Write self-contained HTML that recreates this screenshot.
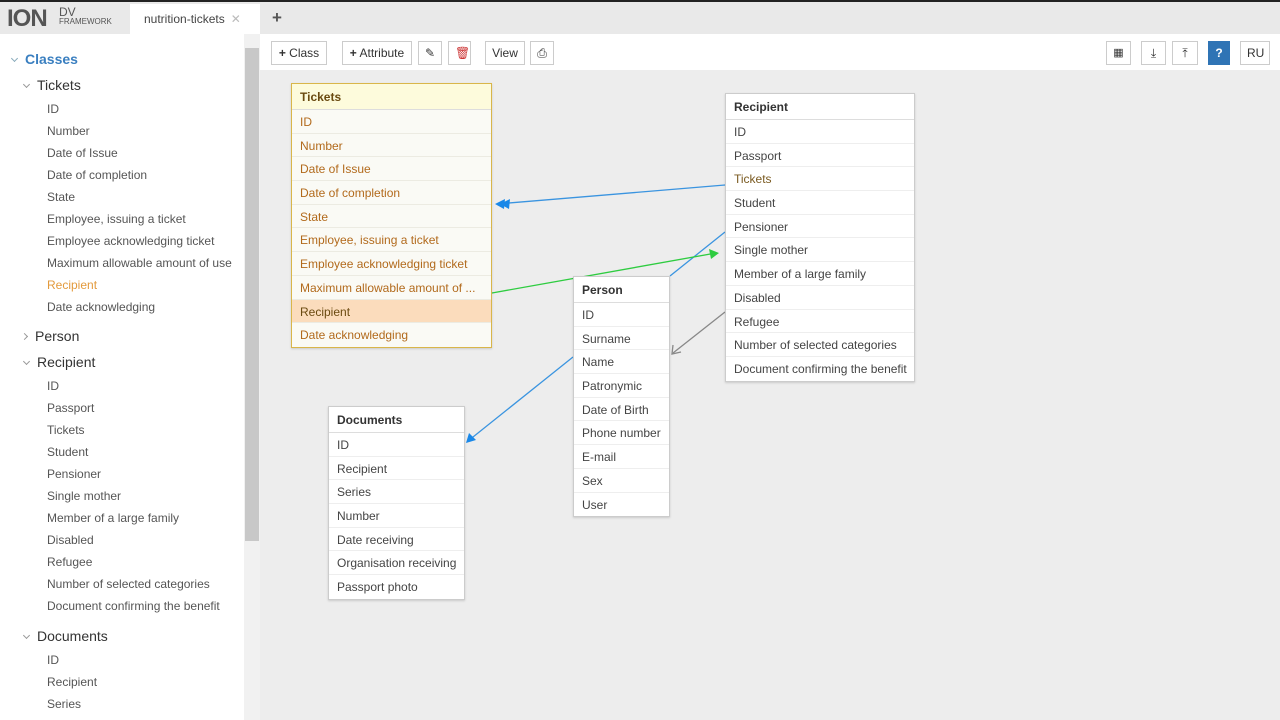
<!DOCTYPE html>
<html><head><meta charset="utf-8"><style>
*{margin:0;padding:0;box-sizing:border-box}
body{width:1280px;height:720px;overflow:hidden;font-family:"Liberation Sans",sans-serif;background:#ededed;position:relative;font-size:12px;color:#333}
.top{position:absolute;left:0;top:0;width:1280px;height:34px;background:#e9e9e9;border-top:2px solid #222}
.logo{position:absolute;left:7px;top:3px;font-size:24px;font-weight:bold;color:#555;letter-spacing:-1px}
.logo2{position:absolute;left:59px;top:5px;font-size:12px;color:#555;line-height:10px}
.logo2 small{font-size:8px;display:block}
.tab{position:absolute;left:130px;top:2px;width:130px;height:32px;background:#fff;padding:8px 14px;font-size:12px;color:#444;white-space:nowrap}
.tab span{color:#bbb;margin-left:6px}
.plus{position:absolute;left:272px;top:6px;font-size:17px;font-weight:bold;color:#555}
.side{position:absolute;left:0;top:34px;width:244px;height:686px;background:#fff}
.sb{position:absolute;left:244px;top:34px;width:16px;height:686px;background:#f1f1f1}
.sb div{position:absolute;left:1px;top:14px;width:14px;height:493px;background:#c8c8c8}
.si{position:absolute;font-size:12px;color:#555;white-space:nowrap}
.grp{position:absolute;font-size:14px;color:#333;white-space:nowrap}
.cv{display:inline-block;width:5px;height:5px;border-right:1px solid #999;border-bottom:1px solid #999;transform:rotate(45deg);margin:0 8px 4px 2px;vertical-align:middle}
.cr{display:inline-block;width:5px;height:5px;border-right:1px solid #999;border-bottom:1px solid #999;transform:rotate(-45deg);margin:0 8px 2px 0;vertical-align:middle}
.tb{position:absolute;left:260px;top:34px;width:1020px;height:36px;background:#fff}
.btn{position:absolute;top:41px;height:24px;border:1px solid #ccc;background:#fff;font-size:12px;color:#333;padding:4px 6px;white-space:nowrap;line-height:14px;text-align:center}
.box{position:absolute;background:#fff;border:1px solid #ccc;box-shadow:0 1px 2px rgba(0,0,0,.15)}
.box .h{height:26px;font-weight:bold;padding:6px 8px;font-size:12px;border-bottom:1px solid #ddd}
.box .r{height:23.7px;padding:5px 8px;font-size:12px;border-bottom:1px solid #eee;white-space:nowrap;overflow:hidden;color:#444}
.tk{background:#fafaf5;border:1px solid #d9b64a}
.tk .h{background:#fdfbdc;color:#6a4a10}
.tk .r{color:#b26a1c;border-bottom:1px solid #ecebe2}
</style></head><body>
<div class="top">
<div class="logo">ION</div><div class="logo2">DV<small>FRAMEWORK</small></div>
<div class="tab">nutrition-tickets<span>✕</span></div>
<div class="plus">+</div>
</div>
<div class="side">
<div class="grp" style="left:10px;top:17px;color:#3a7fc0;font-weight:bold"><i class="cv" style="border-color:#8ab"></i>Classes</div>
<div class="grp" style="left:22px;top:43px"><i class="cv"></i>Tickets</div>
<div class="si" style="left:47px;top:68px">ID</div>
<div class="si" style="left:47px;top:90px">Number</div>
<div class="si" style="left:47px;top:112px">Date of Issue</div>
<div class="si" style="left:47px;top:134px">Date of completion</div>
<div class="si" style="left:47px;top:156px">State</div>
<div class="si" style="left:47px;top:178px">Employee, issuing a ticket</div>
<div class="si" style="left:47px;top:200px">Employee acknowledging ticket</div>
<div class="si" style="left:47px;top:222px">Maximum allowable amount of use</div>
<div class="si" style="left:47px;top:244px;color:#e39a3c">Recipient</div>
<div class="si" style="left:47px;top:266px">Date acknowledging</div>
<div class="grp" style="left:22px;top:294px"><i class="cr"></i>Person</div>
<div class="grp" style="left:22px;top:320px"><i class="cv"></i>Recipient</div>
<div class="si" style="left:47px;top:345px">ID</div>
<div class="si" style="left:47px;top:367px">Passport</div>
<div class="si" style="left:47px;top:389px">Tickets</div>
<div class="si" style="left:47px;top:411px">Student</div>
<div class="si" style="left:47px;top:433px">Pensioner</div>
<div class="si" style="left:47px;top:455px">Single mother</div>
<div class="si" style="left:47px;top:477px">Member of a large family</div>
<div class="si" style="left:47px;top:499px">Disabled</div>
<div class="si" style="left:47px;top:521px">Refugee</div>
<div class="si" style="left:47px;top:543px">Number of selected categories</div>
<div class="si" style="left:47px;top:565px">Document confirming the benefit</div>
<div class="grp" style="left:22px;top:594px"><i class="cv"></i>Documents</div>
<div class="si" style="left:47px;top:619px">ID</div>
<div class="si" style="left:47px;top:641px">Recipient</div>
<div class="si" style="left:47px;top:663px">Series</div>
</div>
<div class="sb"><div></div></div>
<div class="tb"></div>
<div class="btn" style="left:271px;width:56px"><b>+</b> Class</div>
<div class="btn" style="left:342px;width:70px"><b>+</b> Attribute</div>
<div class="btn" style="left:418px;width:24px">✎</div>
<div class="btn" style="left:448px;width:23px;color:#c33">🗑</div>
<div class="btn" style="left:485px;width:40px">View</div>
<div class="btn" style="left:530px;width:24px">⎙</div>
<div class="btn" style="left:1106px;width:25px;font-size:11px">▦</div>
<div class="btn" style="left:1141px;width:25px">⤓</div>
<div class="btn" style="left:1172px;width:26px">⤒</div>
<div class="btn" style="left:1208px;width:22px;background:#2f74b5;border-color:#2f74b5;color:#fff;font-weight:bold">?</div>
<div class="btn" style="left:1240px;width:30px">RU</div>

<svg style="position:absolute;left:0;top:0" width="1280" height="720">
<g stroke-width="1.3" fill="none">
<line x1="725" y1="185" x2="497" y2="204" stroke="#3a94e0"/>
<line x1="725" y1="232" x2="670" y2="276" stroke="#3a94e0"/>
<line x1="492" y1="293" x2="716" y2="253" stroke="#2ecc40"/>
<line x1="725" y1="312" x2="673" y2="353" stroke="#888"/>
<line x1="573" y1="357" x2="468" y2="441" stroke="#3a94e0"/>
</g>
<polygon points="495,204 505,199 504,209" fill="#1a88e8"/>
<polygon points="500,204 510,199 509,209" fill="#1a88e8"/>
<polygon points="719,253 709,249 711,259" fill="#2ecc40"/>
<polygon points="466,443 469,433 476,440" fill="#1a88e8"/>
<polyline points="673,345 672,354 681,352" stroke="#888" fill="none" stroke-width="1.3"/>
</svg>

<div class="box tk" style="left:291px;top:83px;width:201px">
<div class="h">Tickets</div>
<div class="r">ID</div><div class="r">Number</div><div class="r">Date of Issue</div><div class="r">Date of completion</div><div class="r">State</div><div class="r">Employee, issuing a ticket</div><div class="r">Employee acknowledging ticket</div><div class="r">Maximum allowable amount of ...</div><div class="r" style="background:#fbdcbc;color:#6a4a10">Recipient</div><div class="r" style="border:0">Date acknowledging</div>
</div>
<div class="box" style="left:725px;top:93px;width:190px">
<div class="h">Recipient</div>
<div class="r">ID</div><div class="r">Passport</div><div class="r" style="color:#7a5a20">Tickets</div><div class="r">Student</div><div class="r">Pensioner</div><div class="r">Single mother</div><div class="r">Member of a large family</div><div class="r">Disabled</div><div class="r">Refugee</div><div class="r">Number of selected categories</div><div class="r" style="border:0">Document confirming the benefit</div>
</div>
<div class="box" style="left:573px;top:276px;width:97px">
<div class="h">Person</div>
<div class="r">ID</div><div class="r">Surname</div><div class="r">Name</div><div class="r">Patronymic</div><div class="r">Date of Birth</div><div class="r">Phone number</div><div class="r">E-mail</div><div class="r">Sex</div><div class="r" style="border:0">User</div>
</div>
<div class="box" style="left:328px;top:406px;width:137px">
<div class="h">Documents</div>
<div class="r">ID</div><div class="r">Recipient</div><div class="r">Series</div><div class="r">Number</div><div class="r">Date receiving</div><div class="r">Organisation receiving</div><div class="r" style="border:0">Passport photo</div>
</div>
</body></html>
